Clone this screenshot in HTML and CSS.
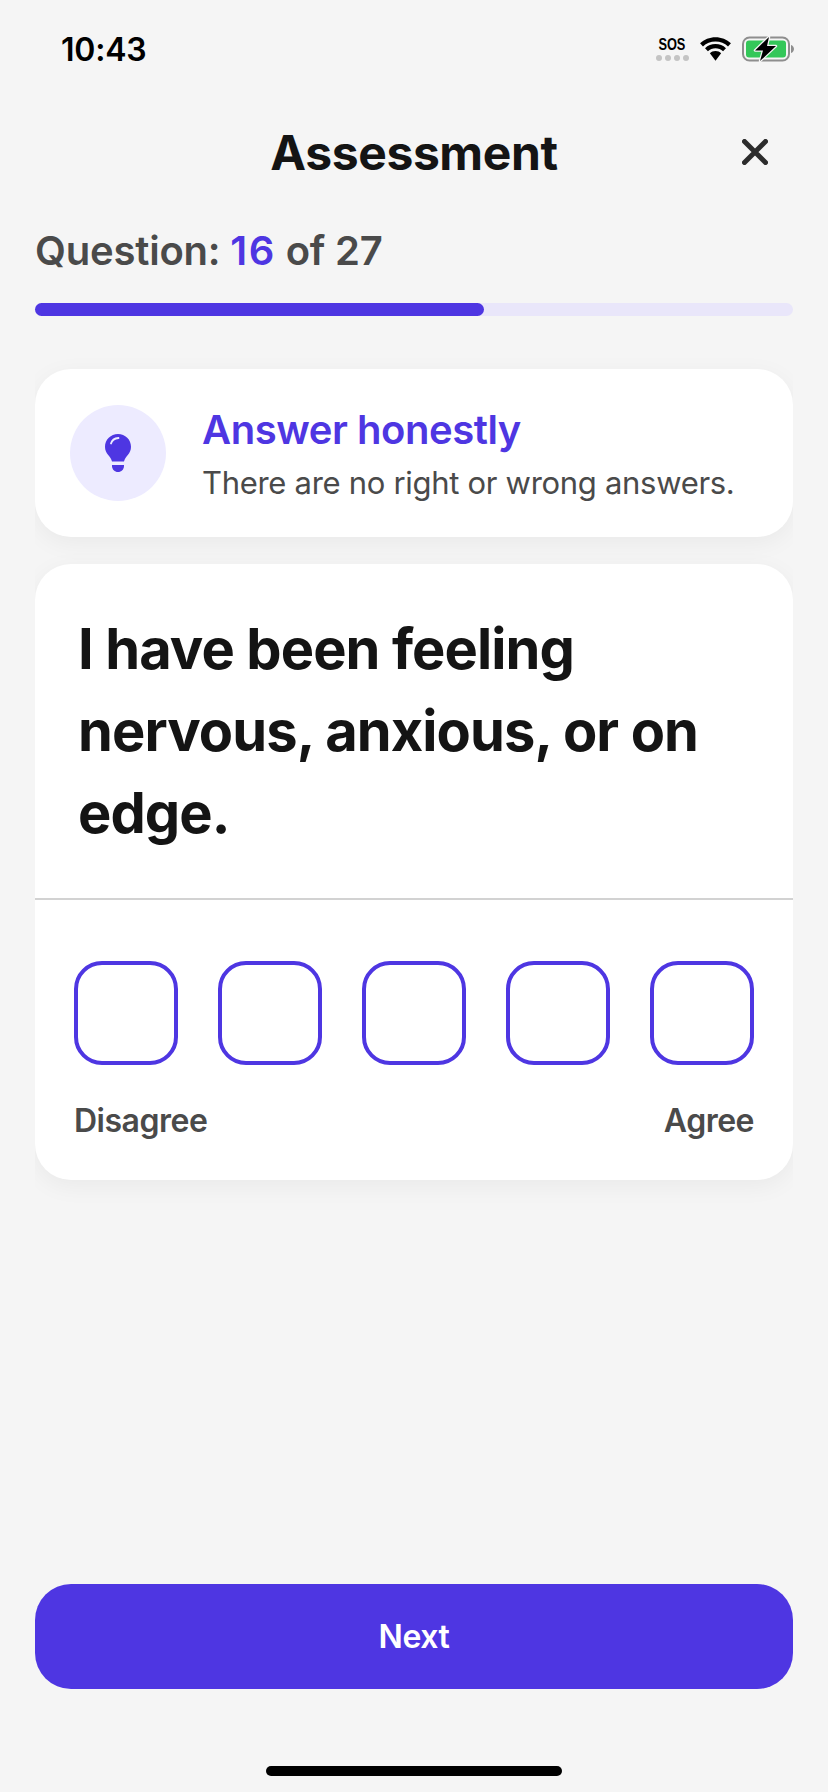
FILE: index.html
```html
<!DOCTYPE html>
<html lang="en">
<head>
    <meta charset="UTF-8">
    <meta name="viewport" content="width=device-width, initial-scale=1.0">
    <link rel="stylesheet" href="styles.css">
    <title>Assessment</title>
</head>
<body>
<div class="screen">
    <div class="status-bar">
        <div class="status-time">10:43</div>
        <div class="status-icons">
            <div class="sos">
                <span class="sos-text">SOS</span>
                <span class="sos-dots"><i></i><i></i><i></i><i></i></span>
            </div>
            <svg class="wifi" width="33" height="24" viewBox="0 0 34 24">
                <path d="M17 4.200c5 0 9.500 1.900 12.900 5.100l3-3.200C28.700 2.400 23.100 0 17 0S5.300 2.400 1.100 6.100l3 3.200C7.500 6.100 12 4.200 17 4.200z" fill="#000"/>
                <path d="M17 11.300c3 0 5.700 1.100 7.800 3l3-3.200C24.900 8.400 21.100 6.900 17 6.900s-7.900 1.500-10.800 4.200l3 3.200c2.100-1.900 4.800-3 7.800-3z" fill="#000"/>
                <path d="M17 14c-2.300 0-4.300.9-5.800 2.300L17 24l5.800-7.700C21.300 14.900 19.300 14 17 14z" fill="#000"/>
            </svg>
            <svg class="battery" width="52" height="26" viewBox="0 0 52 26">
                <rect x="1" y="1.500" width="46" height="23" rx="6.500" fill="none" stroke="#8e8e8e" stroke-width="2"/>
                <rect x="4" y="4.500" width="40" height="17" rx="3" fill="#34c759"/>
                <path d="M49 9v8c1.700-.5 3-2.100 3-4s-1.300-3.500-3-4z" fill="#8e8e8e"/>
                <path d="M27 1 13 14.500h8l-3 10.500 16-15h-9z" fill="#000" stroke="#f5f5f5" stroke-width="2.500" stroke-linejoin="round" paint-order="stroke"/>
            </svg>
        </div>
    </div>

    <div class="header">
        <div class="header-title">Assessment</div>
        <svg class="close-icon" width="26" height="26" viewBox="0 0 26 26">
            <path d="M2.500 2.500 23.500 23.500M23.500 2.500 2.500 23.500" stroke="#2c2c2c" stroke-width="5" stroke-linecap="round"/>
        </svg>
    </div>

    <div class="progress-label">Question: <span class="progress-now">16</span> of 27</div>
    <div class="progress-track"><div class="progress-fill" style="width: 59.3%"></div></div>

    <div class="card tip-card">
        <div class="tip-icon">
            <svg width="26" height="38" viewBox="0 0 26 38">
                <path d="M13 0C5.800 0 0 5.600 0 12.800c0 3.400 1.300 6.100 3.200 8.300 1.700 2 3.200 3.900 3.800 6.400h12c.6-2.500 2.100-4.400 3.800-6.400 1.900-2.200 3.200-4.900 3.200-8.300C26 5.600 20.200 0 13 0z" fill="#4e36e2"/>
                <path d="M6 9.500C6.800 6.500 9.200 4.400 13.500 4" fill="none" stroke="#edebff" stroke-width="1.800" stroke-linecap="round"/>
                <path d="M7 31h12v1c0 3.400-2.700 6-6 6s-6-2.600-6-6z" fill="#4e36e2"/>
            </svg>
        </div>
        <div class="tip-text">
            <div class="tip-title">Answer honestly</div>
            <div class="tip-sub">There are no right or wrong answers.</div>
        </div>
    </div>

    <div class="card question-card">
        <div class="question-text">I have been feeling nervous, anxious, or on edge.</div>
        <div class="answers">
            <div class="answer-row">
                <div class="answer-box"></div>
                <div class="answer-box"></div>
                <div class="answer-box"></div>
                <div class="answer-box"></div>
                <div class="answer-box"></div>
            </div>
            <div class="answer-labels">
                <span>Disagree</span>
                <span>Agree</span>
            </div>
        </div>
    </div>

    <div class="next-button">Next</div>
    <div class="home-indicator"></div>
</div>
</body>
</html>
```

FILE: styles.css
```css
* {
    box-sizing: border-box;
}

body {
    margin: 0;
    background-color: #f5f5f5;
    font-family: Inter, "Liberation Sans", sans-serif;
    color: #141414;
}

.screen {
    display: flex;
    flex-direction: column;
    width: 828px;
    height: 1792px;
    padding: 0 35px;
    overflow: hidden;
}

.status-bar {
    display: flex;
    justify-content: space-between;
    align-items: center;
    height: 50px;
    margin-top: 24px;
    padding-left: 26px;
}

.status-time {
    font-size: 32px;
    font-weight: 600;
    letter-spacing: -0.2px;
    color: #000;
}

.status-icons {
    display: flex;
    align-items: center;
    gap: 10px;
    margin-right: -1px;
}

.sos {
    display: flex;
    flex-direction: column;
    align-items: center;
    gap: 3px;
}

.sos-text {
    font-family: "Liberation Sans", sans-serif;
    font-size: 16px;
    line-height: 14px;
    font-weight: 700;
    color: #000;
    transform: scaleX(0.8);
}

.sos-dots {
    display: flex;
    gap: 3px;
}

.sos-dots i {
    width: 6px;
    height: 6px;
    border-radius: 50%;
    background-color: #c4c4c4;
}

.header {
    position: relative;
    display: flex;
    justify-content: center;
    align-items: center;
    height: 60px;
    margin-top: 48px;
}

.header-title {
    font-size: 48px;
    font-weight: 700;
    letter-spacing: -0.4px;
}

.close-icon {
    position: absolute;
    right: 25px;
    top: 17px;
}

.progress-label {
    margin-top: 45px;
    font-size: 40px;
    line-height: 48px;
    font-weight: 600;
    letter-spacing: -0.2px;
    color: #4a4a4a;
}

.progress-now {
    letter-spacing: 1.5px;
    color: #4e36e2;
}

.progress-track {
    height: 13px;
    margin-top: 28px;
    border-radius: 7px;
    background-color: #e9e6fa;
}

.progress-fill {
    height: 100%;
    border-radius: 7px;
    background-color: #4e36e2;
}

/* shadow stops at the card's own left and right edges, like the reference */
.card {
    flex: none;
    background-color: #fff;
    border-radius: 36px;
    box-shadow: 0 6px 24px rgba(0, 0, 0, 0.05);
    clip-path: inset(-30px 0);
}

.tip-card {
    display: flex;
    align-items: center;
    gap: 36px;
    height: 168px;
    margin-top: 53px;
    padding: 0 35px;
}

.tip-icon {
    display: flex;
    flex: none;
    justify-content: center;
    align-items: center;
    width: 96px;
    height: 96px;
    border-radius: 50%;
    background-color: #edebff;
}

.tip-text {
    padding-top: 2px;
}

.tip-title {
    font-size: 40px;
    line-height: 48px;
    font-weight: 600;
    letter-spacing: -0.45px;
    color: #4e36e2;
}

.tip-sub {
    margin-top: 9px;
    font-size: 31px;
    line-height: 40px;
    letter-spacing: -0.3px;
    white-space: nowrap;
    color: #4a4a4a;
}

.question-card {
    height: 616px;
    margin-top: 27px;
}

.question-text {
    height: 336px;
    padding: 44px 35px 0 43px;
    border-bottom: 2px solid #d2d2d2;
    font-size: 56px;
    line-height: 82px;
    font-weight: 700;
    letter-spacing: -0.9px;
}

.answers {
    padding: 61px 39px 0;
}

.answer-row {
    display: flex;
    justify-content: space-between;
}

.answer-box {
    width: 104px;
    height: 104px;
    border: 4px solid #4e36e2;
    border-radius: 28px;
}

.answer-labels {
    display: flex;
    justify-content: space-between;
    margin-top: 36px;
    font-size: 32px;
    line-height: 40px;
    font-weight: 600;
    letter-spacing: -0.5px;
    color: #4a4a4a;
}

.next-button {
    display: flex;
    flex: none;
    justify-content: center;
    align-items: center;
    height: 105px;
    margin-top: auto;
    border-radius: 36px;
    background-color: #4e36e2;
    font-size: 32px;
    font-weight: 600;
    letter-spacing: -0.4px;
    color: #fff;
}

.home-indicator {
    flex: none;
    align-self: center;
    width: 296px;
    height: 10px;
    margin-top: 77px;
    margin-bottom: 16px;
    border-radius: 5px;
    background-color: #000;
}
```
